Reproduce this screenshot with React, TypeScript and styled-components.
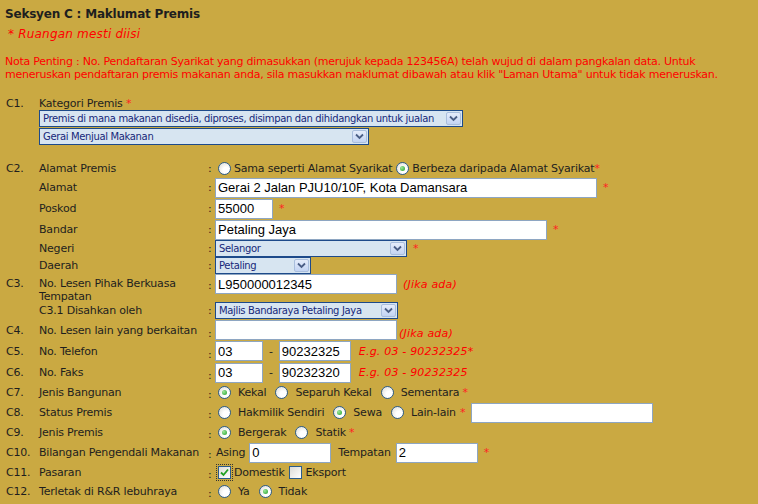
import React from 'react';
import styled, { createGlobalStyle } from 'styled-components';

const GlobalStyle = createGlobalStyle`
	html, body {
		margin: 0;
		background: #caa942;
	}
	body {
		font-family: 'DejaVu Sans', Verdana, sans-serif;
		font-size: 11px;
		color: #1e1e1e;
	}
`;

const Page = styled.div`
	padding: 7px 0 0 5px;
	height: 497px;
	overflow: hidden;
`;

const Title = styled.h3`
	margin: 0;
	font-size: 12px;
	font-weight: bold;
	line-height: 14px;
	letter-spacing: -0.2px;
`;

const Mandatory = styled.p`
	margin: 6px 0 0 3px;
	color: #f00;
	font-style: italic;
	font-size: 12px;
	line-height: 14px;
	letter-spacing: 0.2px;
`;

const Notice = styled.p`
	margin: 14px 0 0;
	color: #f00;
	line-height: 13px;
	letter-spacing: -0.25px;
`;

const Form = styled.div`
	margin-top: 15px;
	letter-spacing: -0.2px;
`;

const Row = styled.div<{ $h: number; $top?: boolean }>`
	display: grid;
	grid-template-columns: 34px 169px 7px 1fr;
	align-items: ${(p) => (p.$top ? 'start' : 'center')};
	height: ${(p) => p.$h}px;
`;

const Num = styled.div<{ $pad?: number }>`
	padding-left: 1px;
	padding-top: ${(p) => p.$pad ?? 0}px;
	line-height: 13px;
`;

const Label = styled.div<{ $span?: boolean; $pad?: number }>`
	grid-column: ${(p) => (p.$span ? '2 / -1' : 'auto')};
	line-height: 13px;
	padding-top: ${(p) => p.$pad ?? 0}px;
`;

const Colon = styled.div<{ $pad?: number }>`
	line-height: 13px;
	padding-top: ${(p) => p.$pad ?? 0}px;
`;

const Field = styled.div`
	display: flex;
	align-items: center;
	white-space: nowrap;
`;

const Req = styled.span<{ $gap?: number }>`
	color: #f22;
	margin-left: ${(p) => p.$gap ?? 3}px;
	font-size: 11px;
`;

const Hint = styled.span<{ $gap?: number; $drop?: number }>`
	color: #f00;
	font-style: italic;
	letter-spacing: 0.2px;
	margin-left: ${(p) => p.$gap ?? 6}px;
	position: relative;
	top: ${(p) => p.$drop ?? 0}px;
`;

const SelectStack = styled.div`
	grid-column: 2 / -1;
	display: flex;
	flex-direction: column;
	gap: 1px;
	padding-bottom: 16px;
`;

const SelectBox = styled.div<{ $w: number }>`
	width: ${(p) => p.$w}px;
	height: 17px;
	box-sizing: border-box;
	border: 1px solid #1d4a8a;
	background: #d7e5f1;
	color: #16287a;
	display: flex;
	align-items: center;
	font-size: 10px;
	letter-spacing: -0.35px;
`;

const SelectText = styled.span`
	flex: 1;
	padding-left: 3px;
	overflow: hidden;
	white-space: nowrap;
`;

const DropButton = styled.span`
	flex: none;
	width: 15px;
	height: 13px;
	margin: 0 1px 0 2px;
	box-sizing: border-box;
	border: 1px solid #a9bedd;
	border-radius: 2px;
	background: linear-gradient(#e4ecfb, #c3d4f3);
	display: flex;
	align-items: center;
	justify-content: center;
`;

const TextBox = styled.input<{ $w: number }>`
	width: ${(p) => p.$w}px;
	height: 20px;
	box-sizing: border-box;
	margin: 0;
	padding: 0 2px;
	border: 1px solid #8ea6c2;
	background: #fff;
	font-family: 'Liberation Sans', Arial, sans-serif;
	font-size: 13px;
	color: #000;
	outline: none;
`;

const Option = styled.label<{ $tight?: boolean }>`
	display: inline-flex;
	align-items: center;
	margin-right: ${(p) => (p.$tight ? 1 : 6)}px;
`;

const Radio = styled.span<{ $on?: boolean; $tight?: boolean }>`
	flex: none;
	width: 13px;
	height: 13px;
	margin: 0 ${(p) => (p.$tight ? 3 : 7)}px 0 3px;
	box-sizing: border-box;
	border-radius: 50%;
	border: 1px solid #2b5c8c;
	background: radial-gradient(circle at 65% 65%, #ffffff 30%, #d9d9d2 100%);
	display: flex;
	align-items: center;
	justify-content: center;
	&::after {
		content: '';
		display: ${(p) => (p.$on ? 'block' : 'none')};
		width: 5px;
		height: 5px;
		border-radius: 50%;
		background: radial-gradient(circle at 35% 35%, #9ee89a, #1f9e27);
	}
`;

const FocusRing = styled.span`
	display: inline-flex;
	padding: 2px;
	margin-left: 1px;
	outline: 1px dotted #333;
	outline-offset: -1px;
`;

const Check = styled.span`
	flex: none;
	width: 13px;
	height: 13px;
	box-sizing: border-box;
	border: 1px solid #2b5c8c;
	background: linear-gradient(135deg, #dcdcd7, #ffffff);
	display: flex;
	align-items: center;
	justify-content: center;
`;

const Inline = styled.span<{ $l?: number; $r?: number }>`
	margin-left: ${(p) => p.$l ?? 0}px;
	margin-right: ${(p) => p.$r ?? 0}px;
`;

const Chevron = () => (
	<svg width="9" height="7" viewBox="0 0 9 7">
		<path d="M1 1.5 L4.5 5 L8 1.5" fill="none" stroke="#4a5e86" strokeWidth="1.8" />
	</svg>
);

const Tick = () => (
	<svg width="9" height="9" viewBox="0 0 9 9">
		<path d="M1 4.5 L3.5 7 L8 1.5" fill="none" stroke="#21a121" strokeWidth="1.8" />
	</svg>
);

const Select = ({ w, children }: { w: number; children: React.ReactNode }) => (
	<SelectBox $w={w}>
		<SelectText>{children}</SelectText>
		<DropButton>
			<Chevron />
		</DropButton>
	</SelectBox>
);

const Choice = ({ on, tight, children }: { on?: boolean; tight?: boolean; children: React.ReactNode }) => (
	<Option $tight={tight}>
		<Radio $on={on} $tight={tight} />
		{children}
	</Option>
);

const Premis = () => {
	return (
		<Page>
			<Title>Seksyen C : Maklumat Premis</Title>
			<Mandatory>* Ruangan mesti diisi</Mandatory>
			<Notice>
				Nota Penting : No. Pendaftaran Syarikat yang dimasukkan (merujuk kepada 123456A) telah wujud di dalam pangkalan data. Untuk
				<br />
				meneruskan pendaftaran premis makanan anda, sila masukkan maklumat dibawah atau klik "Laman Utama" untuk tidak meneruskan.
			</Notice>

			<Form>
				<Row $h={14}>
					<Num>C1.</Num>
					<Label $span>
						Kategori Premis <Req $gap={0}>*</Req>
					</Label>
				</Row>
				<Row $h={50} $top>
					<Num />
					<SelectStack>
						<Select w={424}>Premis di mana makanan disedia, diproses, disimpan dan dihidangkan untuk jualan</Select>
						<Select w={330}>Gerai Menjual Makanan</Select>
					</SelectStack>
				</Row>

				<Row $h={17}>
					<Num>C2.</Num>
					<Label>Alamat Premis</Label>
					<Colon>:</Colon>
					<Field>
						<Choice tight>Sama seperti Alamat Syarikat</Choice>
						<Choice tight on>
							Berbeza daripada Alamat Syarikat<Req $gap={0}>*</Req>
						</Choice>
					</Field>
				</Row>
				<Row $h={21}>
					<Num />
					<Label>Alamat</Label>
					<Colon>:</Colon>
					<Field>
						<TextBox $w={382} defaultValue="Gerai 2 Jalan PJU10/10F, Kota Damansara" />
						<Req $gap={6}>*</Req>
					</Field>
				</Row>
				<Row $h={21}>
					<Num />
					<Label>Poskod</Label>
					<Colon>:</Colon>
					<Field>
						<TextBox $w={58} defaultValue="55000" />
						<Req $gap={6}>*</Req>
					</Field>
				</Row>
				<Row $h={21}>
					<Num />
					<Label>Bandar</Label>
					<Colon>:</Colon>
					<Field>
						<TextBox $w={332} defaultValue="Petaling Jaya" />
						<Req $gap={6}>*</Req>
					</Field>
				</Row>
				<Row $h={17}>
					<Num />
					<Label>Negeri</Label>
					<Colon>:</Colon>
					<Field>
						<Select w={192}>Selangor</Select>
						<Req $gap={6}>*</Req>
					</Field>
				</Row>
				<Row $h={17}>
					<Num />
					<Label>Daerah</Label>
					<Colon>:</Colon>
					<Field>
						<Select w={96}>Petaling</Select>
					</Field>
				</Row>

				<Row $h={27} $top>
					<Num $pad={3}>C3.</Num>
					<Label $pad={3}>
						No. Lesen Pihak Berkuasa
						<br />
						Tempatan
					</Label>
					<Colon $pad={5}>:</Colon>
					<Field>
						<TextBox $w={182} defaultValue="L950000012345" />
						<Hint>(Jika ada)</Hint>
					</Field>
				</Row>
				<Row $h={19}>
					<Num />
					<Label>C3.1 Disahkan oleh</Label>
					<Colon>:</Colon>
					<Field>
						<Select w={183}>Majlis Bandaraya Petaling Jaya</Select>
					</Field>
				</Row>
				<Row $h={20}>
					<Num>C4.</Num>
					<Label>No. Lesen lain yang berkaitan</Label>
					<Colon $pad={6}>:</Colon>
					<Field>
						<TextBox $w={182} defaultValue="" />
						<Hint $gap={2} $drop={3}>
							(Jika ada)
						</Hint>
					</Field>
				</Row>
				<Row $h={22}>
					<Num>C5.</Num>
					<Label>No. Telefon</Label>
					<Colon $pad={6}>:</Colon>
					<Field>
						<TextBox $w={48} defaultValue="03" />
						<Inline $l={6} $r={6}>-</Inline>
						<TextBox $w={72} defaultValue="90232325" />
						<Hint $gap={8}>E.g. 03 - 90232325*</Hint>
					</Field>
				</Row>
				<Row $h={21}>
					<Num>C6.</Num>
					<Label>No. Faks</Label>
					<Colon $pad={5}>:</Colon>
					<Field>
						<TextBox $w={48} defaultValue="03" />
						<Inline $l={6} $r={6}>-</Inline>
						<TextBox $w={72} defaultValue="90232320" />
						<Hint $gap={8}>E.g. 03 - 90232325</Hint>
					</Field>
				</Row>

				<Row $h={19}>
					<Num>C7.</Num>
					<Label>Jenis Bangunan</Label>
					<Colon $pad={3}>:</Colon>
					<Field>
						<Choice on>Kekal</Choice>
						<Choice>Separuh Kekal</Choice>
						<Choice>
							Sementara<Req>*</Req>
						</Choice>
					</Field>
				</Row>
				<Row $h={21}>
					<Num>C8.</Num>
					<Label>Status Premis</Label>
					<Colon $pad={3}>:</Colon>
					<Field>
						<Choice>Hakmilik Sendiri</Choice>
						<Choice on>Sewa</Choice>
						<Choice>
							Lain-lain<Req $gap={4}>*</Req>
						</Choice>
						<TextBox $w={182} defaultValue="" />
					</Field>
				</Row>
				<Row $h={19}>
					<Num>C9.</Num>
					<Label>Jenis Premis</Label>
					<Colon $pad={3}>:</Colon>
					<Field>
						<Choice on>Bergerak</Choice>
						<Choice>
							Statik<Req>*</Req>
						</Choice>
					</Field>
				</Row>
				<Row $h={21}>
					<Num>C10.</Num>
					<Label>Bilangan Pengendali Makanan</Label>
					<Colon $pad={3}>:</Colon>
					<Field>
						<Inline $l={1} $r={4}>Asing</Inline>
						<TextBox $w={82} defaultValue="0" />
						<Inline $l={7} $r={5}>Tempatan</Inline>
						<TextBox $w={82} defaultValue="2" />
						<Req $gap={6}>*</Req>
					</Field>
				</Row>
				<Row $h={19}>
					<Num>C11.</Num>
					<Label>Pasaran</Label>
					<Colon $pad={3}>:</Colon>
					<Field>
						<FocusRing>
							<Check>
								<Tick />
							</Check>
						</FocusRing>
						<Inline $l={1} $r={4}>Domestik</Inline>
						<Check />
						<Inline $l={4}>Eksport</Inline>
					</Field>
				</Row>
				<Row $h={19}>
					<Num>C12.</Num>
					<Label>Terletak di R&amp;R lebuhraya</Label>
					<Colon $pad={3}>:</Colon>
					<Field>
						<Choice>Ya</Choice>
						<Choice on>Tidak</Choice>
					</Field>
				</Row>
			</Form>
		</Page>
	);
};

const App = () => (
	<>
		<GlobalStyle />
		<Premis />
	</>
);

export default App;
